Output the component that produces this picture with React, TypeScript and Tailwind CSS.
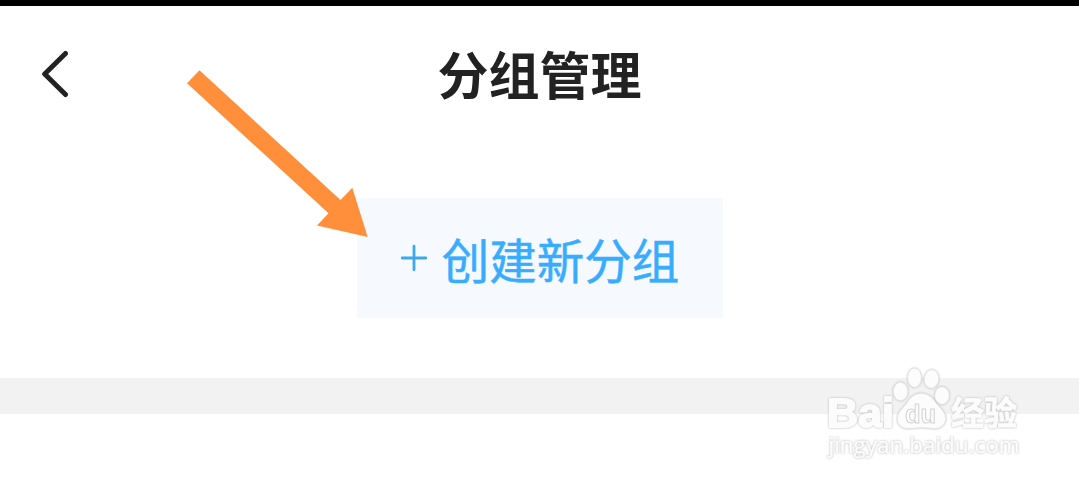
// ── Icons ──────────────────────────────────────────────────────────────────────
function BackIcon() {
  return (
    <svg width="28" height="48" viewBox="0 0 28 48" fill="none">
      <path
        d="M25.5 3.5 L4.7 24 L25.5 44.5"
        stroke="#222222"
        strokeWidth="5"
        strokeLinecap="round"
        strokeLinejoin="round"
      />
    </svg>
  );
}

function PlusIcon() {
  return (
    <svg width="28" height="28" viewBox="0 0 28 28" fill="none">
      <path d="M14 2.2V25.8M2.2 14H25.8" stroke="#3ea8ee" strokeWidth="2.8" strokeLinecap="round" />
    </svg>
  );
}

// ── Overlays ───────────────────────────────────────────────────────────────────
function Arrow() {
  return (
    <svg
      className="absolute left-[180px] top-[60px]"
      width="200"
      height="190"
      viewBox="180 60 200 190"
    >
      <polygon
        points="187,83.3 199.5,70.3 340.5,200 352.3,187.7 367.7,237 317,225.6 328.5,213.3"
        fill="#ff8f3b"
      />
    </svg>
  );
}

function Watermark() {
  return (
    <svg
      className="absolute left-[810px] top-[355px] drop-shadow-[0_0_1px_#b4b4b4]"
      width="230"
      height="115"
      viewBox="0 0 230 115"
      fill="#fcfcfc"
      stroke="#fcfcfc"
      strokeLinejoin="round"
    >
      <text
        x="17"
        y="72"
        fontSize="41"
        strokeWidth="1.8"
        textLength="67"
        lengthAdjust="spacingAndGlyphs"
        className="font-['Liberation_Sans',sans-serif] font-bold"
      >
        Bai
      </text>

      {/* Paw */}
      <g stroke="#e6e6e6" strokeWidth="0.6">
        <ellipse cx="90.5" cy="36.5" rx="7.2" ry="9.2" />
        <ellipse cx="104.5" cy="22.8" rx="6.8" ry="9.5" />
        <ellipse cx="121.5" cy="24" rx="7.2" ry="9.2" transform="rotate(8 121.5 24)" />
        <ellipse cx="132" cy="40.5" rx="7.2" ry="8.8" />
        <path d="M111 38.5 C104 38.5 100 43 97 48 C93 53 87.5 57 87.5 64 C87.5 70 92 73.5 98 73.5 C103 73.5 107 72.5 111 72.5 C116 72.5 120 73.5 125 73.5 C131 73.5 135.5 70 135.5 63 C135.5 57 130 53 126 48 C122 42 118 38.5 111 38.5 Z" />
      </g>
      <text
        x="95"
        y="68"
        fontSize="25"
        stroke="#d2d2d2"
        strokeWidth="1"
        textLength="31"
        lengthAdjust="spacingAndGlyphs"
        className="font-['Liberation_Sans',sans-serif] font-bold"
      >
        du
      </text>

      <text
        x="141"
        y="70"
        fontSize="33"
        strokeWidth="0.8"
        textLength="66"
        lengthAdjust="spacingAndGlyphs"
        className="font-['Noto_Sans_CJK_SC',sans-serif] font-bold"
      >
        经验
      </text>
      <text
        x="18.5"
        y="98"
        fontSize="21"
        strokeWidth="0.4"
        textLength="191"
        lengthAdjust="spacingAndGlyphs"
        className="font-['Open_Sans',sans-serif] font-normal"
      >
        jingyan.baidu.com
      </text>
    </svg>
  );
}

// ── Main Page ──────────────────────────────────────────────────────────────────
export default function App() {
  return (
    <div className="relative h-[483px] w-full overflow-hidden bg-white font-['Noto_Sans_CJK_SC',sans-serif]">
      <div className="h-1.5 bg-black" />

      {/* Header */}
      <header className="grid h-[136px] grid-cols-[1fr_auto_1fr] items-center px-10">
        <button type="button" aria-label="返回">
          <BackIcon />
        </button>
        <h1 className="pb-0.5 text-[51px] leading-none font-bold text-[#222222]">分组管理</h1>
      </header>

      {/* Create group */}
      <div className="flex h-[236px] justify-center pt-14">
        <button
          type="button"
          className="flex h-[120px] w-[366px] items-center justify-center gap-3.5 bg-[#f6faff] text-[#38acff]"
        >
          <PlusIcon />
          <span className="pt-0.5 text-[47.5px] leading-none [-webkit-text-stroke:0.5px_#38acff]">创建新分组</span>
        </button>
      </div>

      <div className="h-9 bg-[#f2f2f2]" />

      <Arrow />
      <Watermark />
    </div>
  );
}
